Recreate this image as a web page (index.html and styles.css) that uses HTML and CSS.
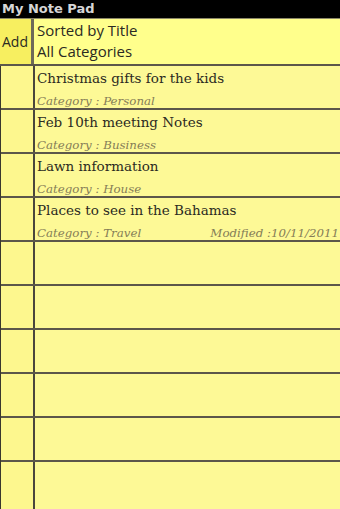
FILE: index.html
```html
<!DOCTYPE html>
<html lang="en">
<head>
    <meta charset="UTF-8">
    <meta name="viewport" content="width=device-width, initial-scale=1.0">
    <title>My Note Pad</title>
    <link rel="stylesheet" href="styles.css">
</head>
<body>
    <div class="titlebar">My Note Pad</div>
    <div class="header">
        <div class="add">Add</div>
        <div class="sort">
            <div>Sorted by Title</div>
            <div>All Categories</div>
        </div>
    </div>
    <div class="list">
        <div class="row">
            <div class="gutter"></div>
            <div class="note">
                <div class="title">Christmas gifts for the kids</div>
                <div class="meta"><span>Category : Personal</span></div>
            </div>
        </div>
        <div class="row">
            <div class="gutter"></div>
            <div class="note">
                <div class="title">Feb 10th meeting Notes</div>
                <div class="meta"><span>Category : Business</span></div>
            </div>
        </div>
        <div class="row">
            <div class="gutter"></div>
            <div class="note">
                <div class="title">Lawn information</div>
                <div class="meta"><span>Category : House</span></div>
            </div>
        </div>
        <div class="row">
            <div class="gutter"></div>
            <div class="note">
                <div class="title">Places to see in the Bahamas</div>
                <div class="meta"><span>Category : Travel</span><span class="modified">Modified :10/11/2011</span></div>
            </div>
        </div>
        <div class="row"><div class="gutter"></div><div class="note"></div></div>
        <div class="row"><div class="gutter"></div><div class="note"></div></div>
        <div class="row"><div class="gutter"></div><div class="note"></div></div>
        <div class="row"><div class="gutter"></div><div class="note"></div></div>
        <div class="row"><div class="gutter"></div><div class="note"></div></div>
        <div class="row"><div class="gutter"></div><div class="note"></div></div>
    </div>
</body>
</html>
```

FILE: styles.css
```css
* {
    box-sizing: border-box;
    margin: 0;
    padding: 0;
}
html {
    overflow: hidden;
}
body {
    width: 340px;
    height: 509px;
    overflow: hidden;
    background-color: #fdf996;
    color: #2b2a22;
}
.titlebar {
    height: 18px;
    background-color: #000000;
    color: #d6d6d6;
    font-family: "DejaVu Sans", sans-serif;
    font-weight: bold;
    font-size: 13px;
    line-height: 17px;
    padding-left: 2px;
}
.header {
    display: flex;
    height: 48px;
    border-top: 1px solid #8c8868;
    border-bottom: 2px solid #5c574a;
    font-family: "Open Sans", sans-serif;
}
.add {
    width: 34px;
    background-color: #f7ef60;
    border-right: 3px solid #6e6a58;
    display: flex;
    align-items: center;
    font-size: 14px;
    padding-left: 2px;
}
.sort {
    flex: 1;
    background-color: #ffff8c;
    font-size: 15px;
    line-height: 21px;
    padding: 1px 0 0 3px;
}
.list {
    border-left: 1px solid #3a372e;
    height: 443px;
    display: flex;
    flex-direction: column;
}
.row {
    display: grid;
    grid-template-columns: 32px 1fr;
    height: 44px;
    flex: none;
    border-bottom: 2px solid #5c574a;
}
.row:last-child {
    flex: 1;
    border-bottom: none;
}
.gutter {
    background-color: #fdf78e;
}
.note {
    border-left: 2px solid #4a463c;
    padding: 3px 0 0 2px;
    overflow: hidden;
    font-family: "DejaVu Serif", serif;
}
.title {
    font-size: 13.5px;
    line-height: 18px;
    white-space: nowrap;
}
.meta {
    display: flex;
    font-size: 11.8px;
    font-style: italic;
    line-height: 16px;
    margin-top: 6px;
    color: #857d57;
    white-space: nowrap;
}
.modified {
    margin-left: auto;
    margin-right: 1px;
}
```
